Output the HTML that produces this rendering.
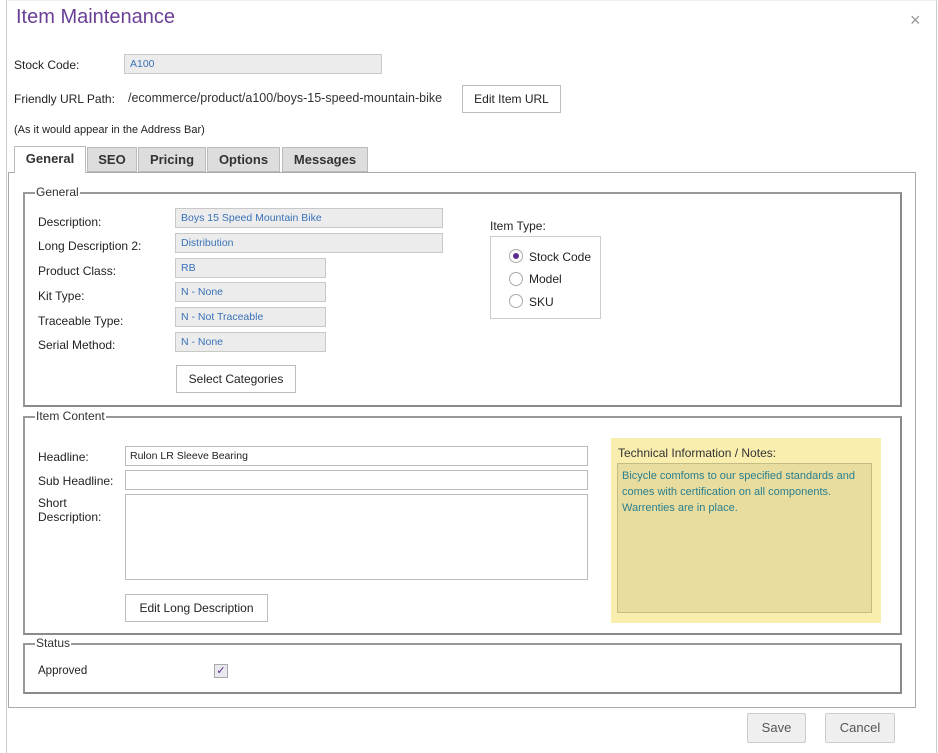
<!DOCTYPE html>
<html><head><style>
*{box-sizing:border-box;margin:0;padding:0}
body{width:938px;height:753px;background:#fff;font-family:"Liberation Sans","DejaVu Sans",sans-serif;font-size:12px;color:#222;position:relative;overflow:hidden}
.a{position:absolute;white-space:nowrap}
.inp{position:absolute;background:#ececec;border:1px solid #c8c8c8;color:#3a72b8;font-size:10.5px;padding:3px 5px;height:20px;line-height:12px}
.winp{position:absolute;background:#fff;border:1px solid #bbb;font-size:10.5px;padding:3px 4px;height:20px;line-height:12px;color:#222}
.btn{position:absolute;background:#fff;border:1px solid #bdbdbd;font-size:12px;text-align:center;color:#222}
.fs{position:absolute;border:2px solid #8a8a8a;border-top-color:#999;border-left-color:#999}
.leg{position:absolute;background:#fff;padding:0 1px;font-size:12px;top:-9px;left:10px;color:#333}
.tab{position:absolute;top:147px;height:25px;background:#ddd;border:1px solid #bbb;font-weight:bold;font-size:13px;text-align:center;line-height:23px;color:#333}
.rad{position:absolute;width:14px;height:14px;border:1px solid #aaa;border-radius:50%;background:#fff}
</style></head><body>
<div class="a" style="left:6px;top:0;width:931px;height:753px;border-left:1px solid #ccc;border-right:1px solid #ccc;border-top:1px solid #eee"></div>
<div class="a" style="left:16px;top:6px;font-size:20px;color:#6a3f96">Item Maintenance</div>
<div class="a" style="left:910px;top:10px;font-size:18px;color:#999">×</div>

<div class="a" style="left:14px;top:58px">Stock Code:</div>
<div class="inp" style="left:124px;top:54px;width:258px">A100</div>
<div class="a" style="left:14px;top:92px">Friendly URL Path:</div>
<div class="a" style="left:128px;top:91px;font-size:12.5px;color:#333">/ecommerce/product/a100/boys-15-speed-mountain-bike</div>
<div class="btn" style="left:462px;top:85px;width:99px;height:28px;line-height:26px">Edit Item URL</div>
<div class="a" style="left:14px;top:124px;font-size:11px">(As it would appear in the Address Bar)</div>

<div class="a" style="left:8px;top:172px;width:908px;height:536px;border:1px solid #aaa"></div>
<div class="tab" style="left:14px;top:146px;width:72px;height:27px;background:#fff;border-bottom:none">General</div>
<div class="tab" style="left:87px;width:50px">SEO</div>
<div class="tab" style="left:138px;width:68px">Pricing</div>
<div class="tab" style="left:207px;width:73px">Options</div>
<div class="tab" style="left:282px;width:86px">Messages</div>

<div class="fs" style="left:23px;top:192px;width:879px;height:215px"><span class="leg">General</span></div>
<div class="a" style="left:38px;top:215px">Description:</div>
<div class="inp" style="left:175px;top:208px;width:268px">Boys 15 Speed Mountain Bike</div>
<div class="a" style="left:38px;top:239px">Long Description 2:</div>
<div class="inp" style="left:175px;top:233px;width:268px">Distribution</div>
<div class="a" style="left:38px;top:264px">Product Class:</div>
<div class="inp" style="left:175px;top:258px;width:151px">RB</div>
<div class="a" style="left:38px;top:289px">Kit Type:</div>
<div class="inp" style="left:175px;top:282px;width:151px">N - None</div>
<div class="a" style="left:38px;top:314px">Traceable Type:</div>
<div class="inp" style="left:175px;top:307px;width:151px">N - Not Traceable</div>
<div class="a" style="left:38px;top:338px">Serial Method:</div>
<div class="inp" style="left:175px;top:332px;width:151px">N - None</div>
<div class="btn" style="left:176px;top:365px;width:120px;height:28px;line-height:26px">Select Categories</div>

<div class="a" style="left:490px;top:219px">Item Type:</div>
<div class="a" style="left:490px;top:236px;width:111px;height:83px;border:1px solid #ccc"></div>
<div class="rad" style="left:509px;top:249px"><div style="position:absolute;left:3px;top:3px;width:6px;height:6px;border-radius:50%;background:#5c2a8c"></div></div>
<div class="a" style="left:529px;top:250px">Stock Code</div>
<div class="rad" style="left:509px;top:272px"></div>
<div class="a" style="left:529px;top:272px">Model</div>
<div class="rad" style="left:509px;top:294px"></div>
<div class="a" style="left:529px;top:295px">SKU</div>

<div class="fs" style="left:23px;top:416px;width:879px;height:219px"><span class="leg">Item Content</span></div>
<div class="a" style="left:38px;top:450px">Headline:</div>
<div class="winp" style="left:125px;top:446px;width:463px">Rulon LR Sleeve Bearing</div>
<div class="a" style="left:38px;top:474px">Sub Headline:</div>
<div class="winp" style="left:125px;top:470px;width:463px"></div>
<div class="a" style="left:38px;top:496px;line-height:14px">Short<br>Description:</div>
<div class="winp" style="left:125px;top:494px;width:463px;height:86px"></div>
<div class="btn" style="left:125px;top:594px;width:143px;height:28px;line-height:26px">Edit Long Description</div>

<div class="a" style="left:611px;top:438px;width:270px;height:185px;background:#f9eeae"></div>
<div class="a" style="left:618px;top:446px;color:#333">Technical Information / Notes:</div>
<div class="a" style="left:617px;top:463px;width:255px;height:150px;background:#e8dd9f;border:1px solid #c5bb85;color:#2a7f8f;font-size:11px;line-height:16px;padding:4px 4px;white-space:normal">Bicycle comfoms to our specified standards and comes with certification on all components.<br>Warrenties are in place.</div>

<div class="fs" style="left:23px;top:643px;width:879px;height:51px"><span class="leg">Status</span></div>
<div class="a" style="left:38px;top:665px;font-size:11.5px">Approved</div>
<div class="a" style="left:214px;top:664px;width:14px;height:14px;border:1px solid #aaa;background:#e8e8ee;color:#5c2a8c;font-size:11px;line-height:12px;text-align:center">✓</div>

<div class="btn" style="left:747px;top:713px;width:59px;height:30px;line-height:28px;background:#efefef;border-color:#ccc;font-size:13px;color:#555;border-radius:2px">Save</div>
<div class="btn" style="left:825px;top:713px;width:70px;height:30px;line-height:28px;background:#efefef;border-color:#ccc;font-size:13px;color:#555;border-radius:2px">Cancel</div>
</body></html>
